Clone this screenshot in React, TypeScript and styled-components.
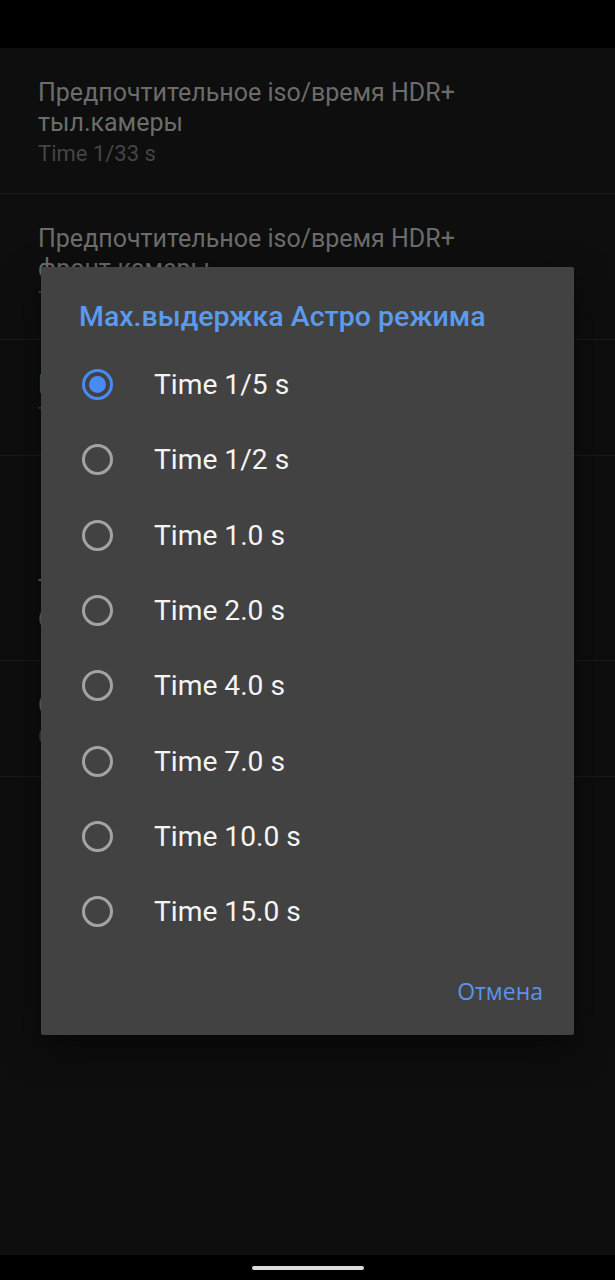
import styled, { createGlobalStyle } from "styled-components";

interface IPref {
  title: string[];
  summary?: string;
  offset?: number;
  minHeight?: number;
}

const prefs: IPref[] = [
  { title: ["Предпочтительное iso/время HDR+", "тыл.камеры"], summary: "Time 1/33 s" },
  { title: ["Предпочтительное iso/время HDR+", "фронт.камеры"], summary: "Time 1/33 s" },
  { title: ["Предпочт. iso Астро режима"], summary: "Time 1/5 s", minHeight: 116 },
  { title: ["Тип шумоподавления", "Обработка кадров"], offset: 119 },
  { title: ["Сохранять RAW"], summary: "Отключено" },
];

const options = [
  "Time 1/5 s",
  "Time 1/2 s",
  "Time 1.0 s",
  "Time 2.0 s",
  "Time 4.0 s",
  "Time 7.0 s",
  "Time 10.0 s",
  "Time 15.0 s",
];

const GlobalStyle = createGlobalStyle`
  body {
    margin: 0;
    background: #0e0e0e;
    font-family: Roboto, "Noto Sans", sans-serif;
  }
`;

const Screen = styled.div`
  position: relative;
  width: 615px;
  height: 1280px;
  display: flex;
  flex-direction: column;
  background: #0e0e0e;
  overflow: hidden;
`;

const StatusBar = styled.div`
  height: 48px;
  background: #000;
`;

const List = styled.div`
  flex: 1;
  display: flex;
  flex-direction: column;
`;

const PrefItem = styled.div<{ $offset?: number; $minHeight?: number }>`
  box-sizing: border-box;
  min-height: ${(p) => p.$minHeight ?? 0}px;
  padding: ${(p) => p.$offset ?? 30}px 38px 25px;
  border-bottom: 1px solid #1a1a1a;
`;

const PrefTitle = styled.div`
  font-size: 25px;
  line-height: 30px;
  color: #6c6c6c;
`;

const PrefSummary = styled.div`
  margin-top: 2px;
  font-size: 22px;
  line-height: 28px;
  color: #454545;
`;

const NavBar = styled.div`
  height: 25px;
  background: #000;
  display: flex;
  align-items: center;
  justify-content: center;
`;

const HomeHandle = styled.div`
  width: 112px;
  height: 4px;
  margin-top: 1px;
  border-radius: 2px;
  background: #dcdcdc;
`;

const Dialog = styled.div`
  position: absolute;
  left: 41px;
  top: 267px;
  width: 533px;
  height: 768px;
  display: flex;
  flex-direction: column;
  background: #424242;
  border-radius: 2px;
  box-shadow: 0 14px 36px rgba(0, 0, 0, 0.55);
`;

const DialogTitle = styled.div`
  padding: 32px 38px 0;
  margin-bottom: 13px;
  font-size: 28.5px;
  line-height: 35px;
  font-weight: 500;
  color: #5b9bee;
`;

const Option = styled.div`
  height: 75.3px;
  display: flex;
  align-items: center;
  padding-left: 41px;
  gap: 41px;
  font-size: 28.2px;
  color: #f4f4f4;
`;

const Radio = styled.span<{ $checked?: boolean }>`
  width: 31px;
  height: 31px;
  box-sizing: border-box;
  border-radius: 50%;
  border: 3px solid ${(p) => (p.$checked ? "#4a8af4" : "#a3a3a3")};
  display: flex;
  align-items: center;
  justify-content: center;
  flex-shrink: 0;

  &::after {
    content: "";
    width: 17px;
    height: 17px;
    border-radius: 50%;
    background: ${(p) => (p.$checked ? "#4a8af4" : "transparent")};
  }
`;

const Actions = styled.div`
  flex: 1;
  display: flex;
  justify-content: flex-end;
  align-items: flex-start;
  padding: 27px 31px 0 0;
`;

const CancelButton = styled.button`
  border: none;
  background: transparent;
  padding: 0;
  font-family: "Open Sans", Roboto, sans-serif;
  font-weight: 500;
  font-size: 23px;
  line-height: 30px;
  color: #5a93ea;
`;

export default function App() {
  return (
    <>
      <GlobalStyle />
      <Screen>
        <StatusBar />
        <List>
          {prefs.map((pref, i) => (
            <PrefItem key={i} $offset={pref.offset} $minHeight={pref.minHeight}>
              {pref.title.map((line) => (
                <PrefTitle key={line}>{line}</PrefTitle>
              ))}
              {pref.summary && <PrefSummary>{pref.summary}</PrefSummary>}
            </PrefItem>
          ))}
        </List>
        <NavBar>
          <HomeHandle />
        </NavBar>

        <Dialog>
          <DialogTitle>Max.выдержка Астро режима</DialogTitle>
          {options.map((opt, i) => (
            <Option key={opt}>
              <Radio $checked={i === 0} />
              {opt}
            </Option>
          ))}
          <Actions>
            <CancelButton>Отмена</CancelButton>
          </Actions>
        </Dialog>
      </Screen>
    </>
  );
}
